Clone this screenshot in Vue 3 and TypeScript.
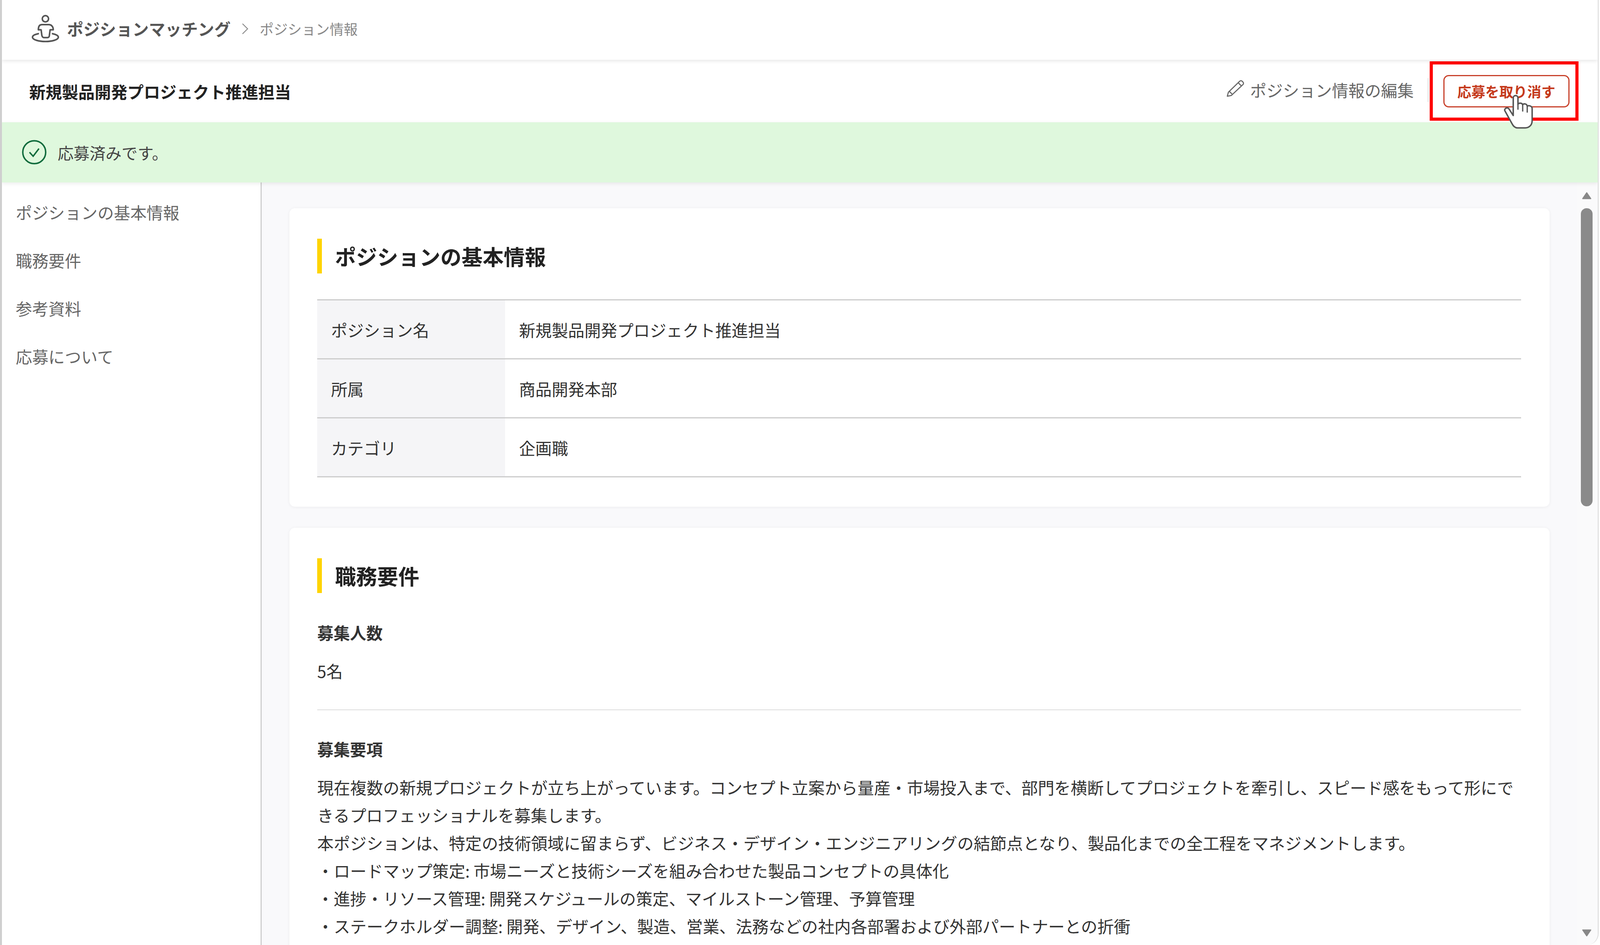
<script setup lang="ts">
const navItems = ['ポジションの基本情報', '職務要件', '参考資料', '応募について']

const basicInfo = [
  { label: 'ポジション名', value: '新規製品開発プロジェクト推進担当' },
  { label: '所属', value: '商品開発本部' },
  { label: 'カテゴリ', value: '企画職' },
]

const descLines = [
  '現在複数の新規プロジェクトが立ち上がっています。コンセプト立案から量産・市場投入まで、部門を横断してプロジェクトを牽引し、スピード感をもって形にできるプロフェッショナルを募集します。',
  '本ポジションは、特定の技術領域に留まらず、ビジネス・デザイン・エンジニアリングの結節点となり、製品化までの全工程をマネジメントします。',
  '・ロードマップ策定: 市場ニーズと技術シーズを組み合わせた製品コンセプトの具体化',
  '・進捗・リソース管理: 開発スケジュールの策定、マイルストーン管理、予算管理',
  '・ステークホルダー調整: 開発、デザイン、製造、営業、法務などの社内各部署および外部パートナーとの折衝',
]
</script>

<template>
  <div class="shell" lang="ja">
    <header class="topbar">
      <svg class="topbar__logo" viewBox="0 0 100 90" fill="none" stroke="#555" stroke-width="4" stroke-linecap="round" stroke-linejoin="round">
        <circle cx="49" cy="18" r="8" />
        <path d="M40 33 H58 C64 33 69 38 69 46 H61 L59 61 C59 64 57 66 54 66 H45 C42 66 41 64 40 61 L38 46 H31 C31 38 34 33 40 33 Z" />
        <path d="M31 56 C21 58 16 61 16 65 C16 71 31 76 49 76 C67 76 82 71 82 65 C82 61 76 58 67 56" />
      </svg>
      <span class="topbar__app">ポジションマッチング</span>
      <svg class="topbar__chevron" viewBox="0 0 20 36" fill="none" stroke="#888" stroke-width="2.5">
        <path d="M3 4 L17 18 L3 32" />
      </svg>
      <span class="topbar__page">ポジション情報</span>
    </header>

    <div class="titlebar">
      <h1 class="titlebar__name">新規製品開発プロジェクト推進担当</h1>
      <a class="titlebar__edit">
        <svg class="titlebar__pencil" viewBox="0 0 80 70" fill="none" stroke="#666" stroke-width="3" stroke-linejoin="round">
          <path d="M16 54 L19 43 L50 13 C52 11 55 11 57 13 L59 15 C61 17 61 20 59 22 L27 52 Z" />
          <path d="M46 17 L55 26 M22 41 L29 48" />
        </svg>
        ポジション情報の編集
      </a>
      <span class="titlebar__divider"></span>
      <div class="cancel-frame">
        <button class="cancel-btn">応募を取り消す</button>
        <svg class="cursor" viewBox="0 0 120 110">
          <path d="M45 63 V15 C45 6 58 6 58 15 V32 C60 28 70 28 71 34 C72 29 83 30 83.5 38 C85 34 97 36 97 44 V77 C97 90 88 97 78 97 H57 C50 97 45 92 42 86 L22 50 C19 44 30 38 34 46 Z" fill="#fff" stroke="#555" stroke-width="4" stroke-linejoin="round" />
          <path d="M58 32 V47 M71 34 V52 M83.5 38 V55" fill="none" stroke="#555" stroke-width="3.5" />
        </svg>
      </div>
    </div>

    <div class="banner">
      <svg class="banner__icon" viewBox="0 0 68 68" fill="none" stroke="#0f6b3c" stroke-width="4">
        <circle cx="34" cy="34" r="31.5" />
        <path d="M21 34 L31 45 L47 24" stroke-width="4" />
      </svg>
      <span>応募済みです。</span>
    </div>

    <div class="body">
      <nav class="sidenav">
        <a v-for="item in navItems" :key="item" class="sidenav__item">{{ item }}</a>
      </nav>

      <main class="content">
        <section class="card">
          <h2 class="card__heading">ポジションの基本情報</h2>
          <div class="info-table">
            <div v-for="row in basicInfo" :key="row.label" class="info-table__row">
              <div class="info-table__label">{{ row.label }}</div>
              <div class="info-table__value">{{ row.value }}</div>
            </div>
          </div>
        </section>

        <section class="card">
          <h2 class="card__heading">職務要件</h2>
          <h3 class="field-title field-title--first">募集人数</h3>
          <p class="field-text">5名</p>
          <hr class="field-rule" />
          <h3 class="field-title">募集要項</h3>
          <p v-for="line in descLines" :key="line" class="field-text">{{ line }}</p>
        </section>
      </main>

      <div class="scrollbar">
        <svg class="scrollbar__arrow" viewBox="0 0 28 22"><path d="M14 3 L25 19 H3 Z" /></svg>
        <div class="scrollbar__thumb"></div>
        <svg class="scrollbar__arrow scrollbar__arrow--down" viewBox="0 0 28 22"><path d="M3 3 H25 L14 19 Z" /></svg>
      </div>
    </div>
  </div>
</template>

<style>
html,
body {
  margin: 0;
  background: #fff;
  overflow: hidden;
}
</style>

<style scoped>
/* horizontal sizes follow the window width, --u is one unit of a 4400 wide design */
.shell {
  --u: calc(100vw / 4400);
  width: calc(var(--u) * 4397);
  height: 100vh;
  box-sizing: border-box;
  display: flex;
  flex-direction: column;
  overflow: hidden;
  border-left: 5px solid #cfcfcf;
  border-right: 3px solid #e2e2e2;
  border-bottom-right-radius: 30px;
  font-family: 'Noto Sans CJK JP', 'Noto Sans', sans-serif;
  font-size: calc(var(--u) * 45);
  color: #333;
  background: #fff;
}

.topbar {
  height: 153px;
  flex: none;
  box-sizing: border-box;
  display: flex;
  align-items: center;
  padding-left: calc(var(--u) * 67);
  padding-bottom: 8px;
  position: relative;
  z-index: 3;
  box-shadow: 0 3px 10px rgba(0, 0, 0, 0.1);
}

.topbar__logo {
  width: calc(var(--u) * 108);
  height: calc(var(--u) * 97);
  margin-top: 5px;
}

.topbar__app {
  margin-left: calc(var(--u) * 4);
  font-weight: 700;
  color: #555;
}

.topbar__chevron {
  width: calc(var(--u) * 20);
  height: calc(var(--u) * 36);
  margin: 2px calc(var(--u) * 30) 0;
}

.topbar__page {
  font-size: calc(var(--u) * 38.5);
  color: #888;
}

.titlebar {
  height: 160px;
  flex: none;
  display: flex;
  align-items: center;
  padding-left: calc(var(--u) * 75);
  padding-right: calc(var(--u) * 53);
}

.titlebar__name {
  margin: 0 auto 0 0;
  font-size: calc(var(--u) * 45);
  font-weight: 700;
  color: #222;
}

.titlebar__edit {
  display: flex;
  align-items: center;
  color: #666;
  margin-top: -8px;
}

.titlebar__pencil {
  width: calc(var(--u) * 80);
  height: calc(var(--u) * 70);
  margin-right: -1px;
}

.titlebar__divider {
  width: 2px;
  height: 61px;
  margin: -6px 0 0 calc(var(--u) * 39);
  background: #dcdcdc;
}

.cancel-frame {
  position: relative;
  box-sizing: border-box;
  width: calc(var(--u) * 409);
  height: 152px;
  margin-left: calc(var(--u) * 3);
  display: flex;
  align-items: center;
  justify-content: center;
  border: 8px solid #f00;
}

.cancel-btn {
  width: calc(var(--u) * 347);
  height: 83px;
  box-sizing: border-box;
  margin-left: calc(var(--u) * 12);
  border: 3px solid #c8412b;
  border-radius: 14px;
  background: #fff;
  font-family: inherit;
  font-size: calc(var(--u) * 38.5);
  font-weight: 700;
  color: #c53a1c;
  padding: 0;
}

.cursor {
  position: absolute;
  left: calc(var(--u) * 176);
  top: 72px;
  width: calc(var(--u) * 120);
  height: calc(var(--u) * 110);
  z-index: 5;
}

.banner {
  height: 154px;
  flex: none;
  display: flex;
  align-items: center;
  gap: calc(var(--u) * 30);
  padding-left: calc(var(--u) * 55);
  background: #dff8dd;
  color: #444;
  font-size: calc(var(--u) * 44);
  position: relative;
  z-index: 2;
  box-shadow: 0 3px 10px rgba(0, 0, 0, 0.08);
}

.banner__icon {
  width: calc(var(--u) * 68);
  height: calc(var(--u) * 68);
}

.body {
  flex: 1;
  min-height: 0;
  display: flex;
}

.sidenav {
  width: calc(var(--u) * 714);
  flex: none;
  box-sizing: border-box;
  padding: 14px 0 0 calc(var(--u) * 38);
  display: flex;
  flex-direction: column;
  border-right: 3px solid #cfcfcf;
}

.sidenav__item {
  height: 123px;
  line-height: 123px;
  color: #666;
}

.content {
  flex: 1;
  min-width: 0;
  padding: 66px calc(var(--u) * 75) 0 calc(var(--u) * 77);
  display: flex;
  flex-direction: column;
  gap: 54px;
  background: #f9f9fb;
}

.card {
  flex: none;
  padding: 78px calc(var(--u) * 79) 75px calc(var(--u) * 76);
  background: #fff;
  border-radius: 14px;
  box-shadow: 0 1px 8px rgba(0, 0, 0, 0.06);
}

.card__heading {
  margin: 0;
  height: 89px;
  line-height: 89px;
  border-left: calc(var(--u) * 13) solid #ffd400;
  padding-left: calc(var(--u) * 36);
  font-size: calc(var(--u) * 58);
  font-weight: 700;
  color: #222;
}

.info-table {
  margin-top: 66px;
  border-top: 3px solid #ccc;
}

.info-table__row {
  height: 151px;
  box-sizing: border-box;
  display: flex;
  border-bottom: 3px solid #ccc;
}

.info-table__label {
  width: calc(var(--u) * 517);
  flex: none;
  box-sizing: border-box;
  padding-left: calc(var(--u) * 38);
  display: flex;
  align-items: center;
  background: #f5f5f7;
}

.info-table__value {
  padding-left: calc(var(--u) * 38);
  display: flex;
  align-items: center;
}

.field-title {
  margin: 63px 0 0;
  font-size: calc(var(--u) * 45);
  line-height: 71px;
  font-weight: 700;
  color: #333;
}

.field-title--first {
  margin-top: 65px;
}

.field-title + .field-text {
  margin-top: 27px;
}

.field-text {
  margin: 0;
  font-size: calc(var(--u) * 45.25);
  line-height: 71px;
  color: #333;
}

.field-rule {
  margin: 64px 0 0;
  height: 2px;
  border: 0;
  background: #ddd;
}

.scrollbar {
  width: calc(var(--u) * 57);
  flex: none;
  box-sizing: border-box;
  display: flex;
  flex-direction: column;
  align-items: center;
  padding: 23px calc(var(--u) * 4) 20px 0;
  background: #fafafb;
}

.scrollbar__arrow {
  width: calc(var(--u) * 28);
  height: 22px;
  flex: none;
  fill: #888;
  stroke: #888;
  stroke-width: 3;
  stroke-linejoin: round;
}

.scrollbar__arrow--down {
  margin-top: auto;
}

.scrollbar__thumb {
  width: calc(var(--u) * 32);
  height: 763px;
  flex: none;
  margin-top: 21px;
  border-radius: calc(var(--u) * 16);
  background: #8a8a8a;
}
</style>
